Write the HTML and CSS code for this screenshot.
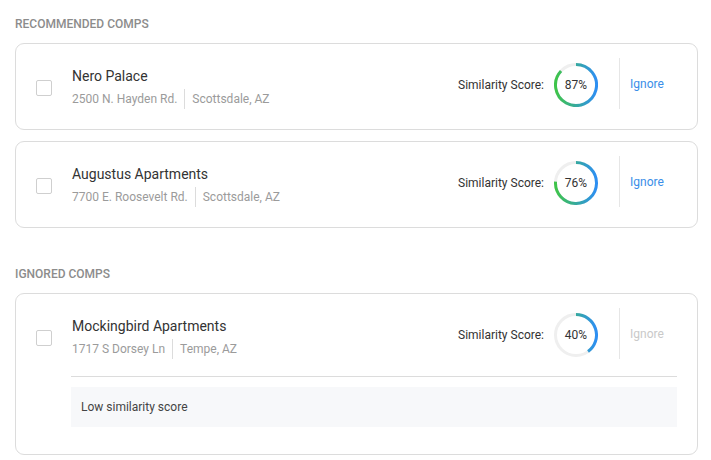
FILE: index.html
```html
<!DOCTYPE html>
<html>
<head>
<meta charset="utf-8">
<link rel="stylesheet" href="styles.css">
</head>
<body>
<div class="page">
  <h2 class="section-title">Recommended Comps</h2>
  <div class="card">
    <div class="row">
      <div class="left">
        <span class="checkbox"></span>
        <div class="info">
          <div class="name">Nero Palace</div>
          <div class="address"><span>2500 N. Hayden Rd.</span><span class="sep"></span><span>Scottsdale, AZ</span></div>
        </div>
      </div>
      <div class="right">
        <div class="score">
          <span class="score-label">Similarity Score:</span>
          <div class="ring">
            <svg width="44" height="44" viewBox="0 0 44 44">
              <defs><linearGradient id="g1" gradientUnits="userSpaceOnUse" x1="2" y1="0" x2="42" y2="0"><stop offset="0" stop-color="#3fc44a"/><stop offset="1" stop-color="#2d8ff2"/></linearGradient></defs>
              <circle cx="22" cy="22" r="20.5" fill="none" stroke="#efefef" stroke-width="3"/>
              <path d="M22 1.5 A20.5 20.5 0 1 1 7.06 7.97" fill="none" stroke="url(#g1)" stroke-width="3"/>
            </svg>
            <span class="pct">87%</span>
          </div>
        </div>
        <div class="action"><span class="ignore">Ignore</span></div>
      </div>
    </div>
  </div>
  <div class="card">
    <div class="row">
      <div class="left">
        <span class="checkbox"></span>
        <div class="info">
          <div class="name">Augustus Apartments</div>
          <div class="address"><span>7700 E. Roosevelt Rd.</span><span class="sep"></span><span>Scottsdale, AZ</span></div>
        </div>
      </div>
      <div class="right">
        <div class="score">
          <span class="score-label">Similarity Score:</span>
          <div class="ring">
            <svg width="44" height="44" viewBox="0 0 44 44">
              <defs><linearGradient id="g2" gradientUnits="userSpaceOnUse" x1="2" y1="0" x2="42" y2="0"><stop offset="0" stop-color="#3fc44a"/><stop offset="1" stop-color="#2d8ff2"/></linearGradient></defs>
              <circle cx="22" cy="22" r="20.5" fill="none" stroke="#efefef" stroke-width="3"/>
              <path d="M22 1.5 A20.5 20.5 0 1 1 1.54 20.71" fill="none" stroke="url(#g2)" stroke-width="3"/>
            </svg>
            <span class="pct">76%</span>
          </div>
        </div>
        <div class="action"><span class="ignore">Ignore</span></div>
      </div>
    </div>
  </div>

  <h2 class="section-title ignored-title">Ignored Comps</h2>
  <div class="card card-ignored">
    <div class="row">
      <div class="left">
        <span class="checkbox"></span>
        <div class="info">
          <div class="name">Mockingbird Apartments</div>
          <div class="address"><span>1717 S Dorsey Ln</span><span class="sep"></span><span>Tempe, AZ</span></div>
        </div>
      </div>
      <div class="right">
        <div class="score">
          <span class="score-label">Similarity Score:</span>
          <div class="ring">
            <svg width="44" height="44" viewBox="0 0 44 44">
              <defs><linearGradient id="g3" gradientUnits="userSpaceOnUse" x1="2" y1="0" x2="42" y2="0"><stop offset="0" stop-color="#3fc44a"/><stop offset="1" stop-color="#2d8ff2"/></linearGradient></defs>
              <circle cx="22" cy="22" r="20.5" fill="none" stroke="#efefef" stroke-width="3"/>
              <path d="M22 1.5 A20.5 20.5 0 0 1 34.05 38.58" fill="none" stroke="url(#g3)" stroke-width="3"/>
            </svg>
            <span class="pct">40%</span>
          </div>
        </div>
        <div class="action"><span class="ignore disabled">Ignore</span></div>
      </div>
    </div>
    <div class="footer">
      <div class="reason">Low similarity score</div>
    </div>
  </div>
</div>
</body>
</html>
```

FILE: styles.css
```css
* { box-sizing: border-box; }
html, body { margin: 0; padding: 0; background: #fff; }
body { font-family: Roboto, "Liberation Sans", Arial, sans-serif; color: #333; }

.page { padding: 16px 13px 0 15px; width: 711px; }

.section-title {
  margin: 0 0 11px 0;
  font-size: 12px;
  line-height: 16px;
  font-weight: 500;
  text-transform: uppercase;
  color: #8c8c8c;
}
.ignored-title { margin-top: 38px; }

.card {
  border: 1px solid #dcdcdc;
  border-radius: 9px;
  padding: 14px 20px 20px 20px;
  margin-bottom: 11px;
  background: #fff;
}
.card-ignored { padding-bottom: 27px; }

.row { display: flex; height: 51px; justify-content: space-between; }

.left { display: flex; align-items: center; padding-top: 8px; }
.checkbox {
  width: 16px; height: 16px;
  border: 1px solid #cfcfcf;
  border-radius: 2px;
  margin-right: 20px;
  flex: none;
}
.info { display: flex; flex-direction: column; }
.name { font-size: 14px; line-height: 20px; color: #333; }
.address {
  display: flex; align-items: stretch;
  margin-top: 3px;
  font-size: 12px; line-height: 20px; color: #9b9b9b;
}
.sep { width: 1px; background: #dcdcdc; margin: 0 7px 0 7px; }

.right { display: flex; align-items: stretch; }
.score { display: flex; align-items: center; padding-top: 3px; }
.score-label { font-size: 12px; color: #333; }
.ring { position: relative; width: 44px; height: 44px; margin-left: 10px; }
.ring svg { display: block; }
.pct {
  position: absolute; left: 0; top: 0; width: 44px; height: 44px;
  display: flex; align-items: center; justify-content: center;
  font-size: 12px; color: #333;
}
.action {
  margin-left: 21px;
  border-left: 1px solid #e6e6e6;
  width: 58px;
  padding-left: 10px;
  display: flex; align-items: center;
}
.ignore { font-size: 12px; color: #3a8ee8; }
.ignore.disabled { color: #c9c9c9; }

.footer { margin-left: 35px; margin-top: 17px; border-top: 1px solid #dcdcdc; padding-top: 10px; }
.reason {
  background: #f7f8fa;
  height: 40px;
  padding-left: 10px;
  display: flex; align-items: center;
  font-size: 12px; color: #444;
}
```
